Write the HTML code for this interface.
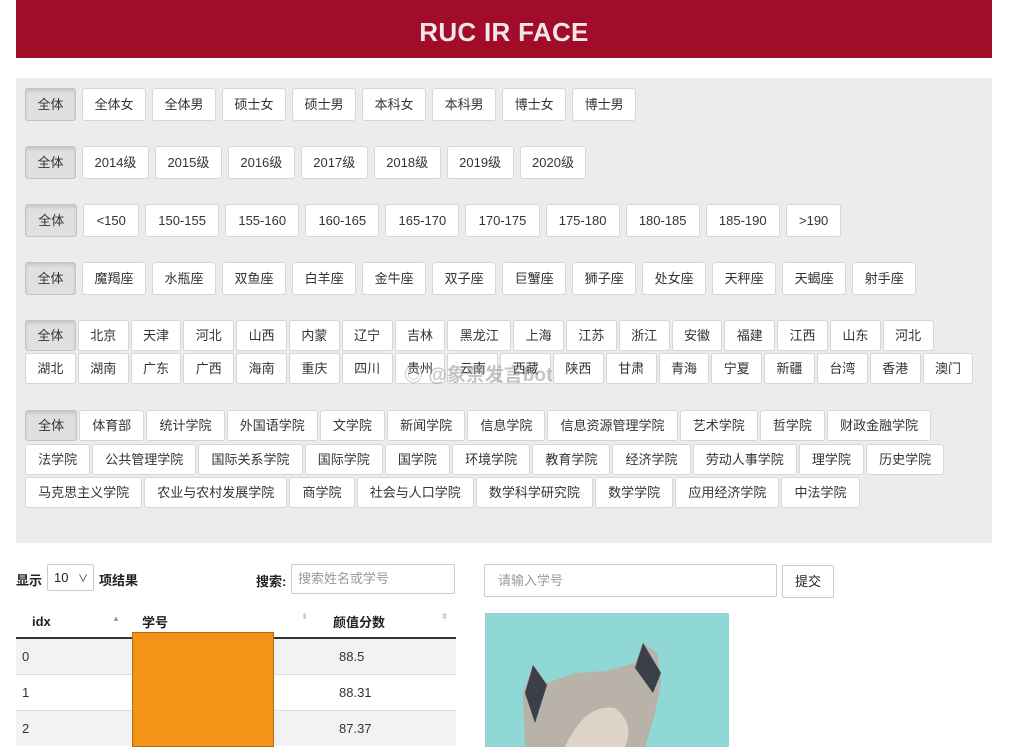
<!DOCTYPE html>
<html><head><meta charset="utf-8"><style>
*{box-sizing:border-box;margin:0;padding:0}
body{width:1024px;height:747px;overflow:hidden;background:#fff;font-family:"Liberation Sans","Noto Sans CJK SC",sans-serif;position:relative;color:#333}
.hdr{position:absolute;left:16px;top:0;width:976px;height:58px;background:#a10c28;color:#f3e6e8;font-weight:bold;font-size:26px;text-align:center;line-height:64px;letter-spacing:0.3px}
.panel{position:absolute;left:16px;top:78px;width:976px;height:465px;background:#ececec}
.row{position:absolute;left:25px;display:flex;gap:6px}
.row.t{gap:2px}
.b{height:33px;line-height:31px;padding:0 11.5px;font-size:13px;background:#fff;border:1px solid #d6d6d6;border-radius:3px;color:#333;white-space:nowrap}
.n .b{padding:0 12.2px}
.t .b{height:31px;line-height:29px;padding:0 11.4px}
.c .b{padding:0 12.1px}
.b.a{background:#e0e0e0;border-color:#c4c4c4;box-shadow:inset 0 2px 3px rgba(0,0,0,.12)}
.lbl{position:absolute;font-size:13px;font-weight:bold;color:#222}
.inp{position:absolute;border:1px solid #ccc;border-radius:2px;font-size:13px;color:#999;padding-left:6px}
table{position:absolute;left:16px;top:605px;width:440px;border-collapse:collapse;font-size:13px}
th{height:33px;text-align:left;padding-left:20px;border-bottom:2px solid #333;font-weight:bold;color:#222}
td{height:36px;padding-left:6px;border-top:1px solid #ddd}
</style></head><body>
<div class="hdr">RUC IR FACE</div>
<div class="panel"></div>
<div class="row" style="top:88px"><span class="b a">全体</span><span class="b">全体女</span><span class="b">全体男</span><span class="b">硕士女</span><span class="b">硕士男</span><span class="b">本科女</span><span class="b">本科男</span><span class="b">博士女</span><span class="b">博士男</span></div>
<div class="row" style="top:146px"><span class="b a">全体</span><span class="b">2014级</span><span class="b">2015级</span><span class="b">2016级</span><span class="b">2017级</span><span class="b">2018级</span><span class="b">2019级</span><span class="b">2020级</span></div>
<div class="row n" style="top:204px"><span class="b a">全体</span><span class="b">&lt;150</span><span class="b">150-155</span><span class="b">155-160</span><span class="b">160-165</span><span class="b">165-170</span><span class="b">170-175</span><span class="b">175-180</span><span class="b">180-185</span><span class="b">185-190</span><span class="b">&gt;190</span></div>
<div class="row" style="top:262px"><span class="b a">全体</span><span class="b">魔羯座</span><span class="b">水瓶座</span><span class="b">双鱼座</span><span class="b">白羊座</span><span class="b">金牛座</span><span class="b">双子座</span><span class="b">巨蟹座</span><span class="b">狮子座</span><span class="b">处女座</span><span class="b">天秤座</span><span class="b">天蝎座</span><span class="b">射手座</span></div>
<div class="row t" style="top:320px"><span class="b a">全体</span><span class="b">北京</span><span class="b">天津</span><span class="b">河北</span><span class="b">山西</span><span class="b">内蒙</span><span class="b">辽宁</span><span class="b">吉林</span><span class="b">黑龙江</span><span class="b">上海</span><span class="b">江苏</span><span class="b">浙江</span><span class="b">安徽</span><span class="b">福建</span><span class="b">江西</span><span class="b">山东</span><span class="b">河北</span></div>
<div class="row t" style="top:353px"><span class="b">湖北</span><span class="b">湖南</span><span class="b">广东</span><span class="b">广西</span><span class="b">海南</span><span class="b">重庆</span><span class="b">四川</span><span class="b">贵州</span><span class="b">云南</span><span class="b">西藏</span><span class="b">陕西</span><span class="b">甘肃</span><span class="b">青海</span><span class="b">宁夏</span><span class="b">新疆</span><span class="b">台湾</span><span class="b">香港</span><span class="b">澳门</span></div>
<div class="row t c" style="top:410px"><span class="b a">全体</span><span class="b">体育部</span><span class="b">统计学院</span><span class="b">外国语学院</span><span class="b">文学院</span><span class="b">新闻学院</span><span class="b">信息学院</span><span class="b">信息资源管理学院</span><span class="b">艺术学院</span><span class="b">哲学院</span><span class="b">财政金融学院</span></div>
<div class="row t c" style="top:444px"><span class="b">法学院</span><span class="b">公共管理学院</span><span class="b">国际关系学院</span><span class="b">国际学院</span><span class="b">国学院</span><span class="b">环境学院</span><span class="b">教育学院</span><span class="b">经济学院</span><span class="b">劳动人事学院</span><span class="b">理学院</span><span class="b">历史学院</span></div>
<div class="row t c" style="top:477px"><span class="b">马克思主义学院</span><span class="b">农业与农村发展学院</span><span class="b">商学院</span><span class="b">社会与人口学院</span><span class="b">数学科学研究院</span><span class="b">数学学院</span><span class="b">应用经济学院</span><span class="b">中法学院</span></div>
<div style="position:absolute;left:404px;top:360px;font-size:19px;color:rgba(150,150,150,.55);font-weight:bold">◎ @象奈发言bot</div>
<div class="lbl" style="left:16px;top:570px">显示</div>
<div class="inp" style="left:47px;top:564px;width:47px;height:27px;line-height:25px;color:#222">10 <span style="font-size:10px;margin-left:6px">∨</span></div>
<div class="lbl" style="left:99px;top:570px">项结果</div>
<div class="lbl" style="left:256px;top:571px">搜索:</div>
<div class="inp" style="left:291px;top:564px;width:164px;height:30px;line-height:28px">搜索姓名或学号</div>
<div class="inp" style="left:484px;top:564px;width:293px;height:33px;line-height:31px;padding-left:13px">请输入学号</div>
<div class="inp" style="left:782px;top:565px;width:52px;height:33px;line-height:31px;color:#222;text-align:center;padding:0">提交</div>
<table><tr><th style="padding-left:16px;width:116px">idx <span style="float:right;margin-right:12px;font-size:8px;color:#999">▲</span></th><th style="width:184px;padding-left:10px">学号<span style="float:right;margin-right:8px;font-size:8px;color:#ccc">⬍</span></th><th style="padding-left:17px">颜值分数<span style="float:right;margin-right:8px;font-size:8px;color:#ccc">⬍</span></th></tr>
<tr style="background:#f2f2f2"><td>0</td><td></td><td style="padding-left:23px">88.5</td></tr>
<tr><td>1</td><td></td><td style="padding-left:23px">88.31</td></tr>
<tr style="background:#f2f2f2"><td>2</td><td></td><td style="padding-left:23px">87.37</td></tr></table>
<div style="position:absolute;left:132px;top:632px;width:142px;height:115px;background:#f39419;border:1px solid #b86a10"></div>
<svg style="position:absolute;left:485px;top:613px" width="244" height="134" viewBox="0 0 244 134">
<rect width="244" height="134" fill="#8fd8d6"/>
<path d="M40 134 L38 80 L48 52 L62 70 L90 60 L120 58 L150 50 L158 30 L172 40 L176 70 L170 100 L160 134 Z" fill="#b8b2a8"/>
<path d="M48 52 L40 80 L50 110 L62 72 Z" fill="#3a3f48"/>
<path d="M158 30 L150 55 L168 80 L176 60 Z" fill="#3a3f48"/>
<path d="M80 134 Q100 90 130 95 Q150 110 140 134 Z" fill="#ddd3c6"/>
</svg>
</body></html>
